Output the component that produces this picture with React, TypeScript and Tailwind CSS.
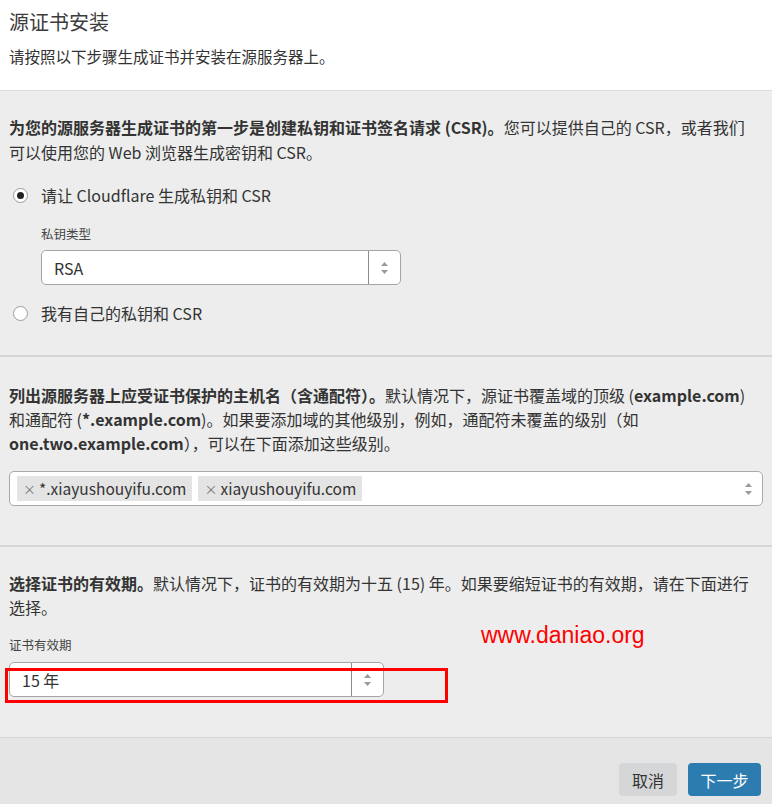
import React from 'react';

const font = { fontFamily: '"Noto Sans CJK SC", "Open Sans", sans-serif' };

function Arrows() {
  return (
    <svg width="9" height="14" viewBox="0 0 9 14" className="text-[#9a9a9a]">
      <path d="M4.5 1 L8 5 L1 5 Z" fill="currentColor" />
      <path d="M4.5 13 L8 9 L1 9 Z" fill="currentColor" />
    </svg>
  );
}

function Radio({ checked, label }: { checked?: boolean; label: string }) {
  return (
    <label className="flex items-center h-5 gap-[13px] pl-[4px]">
      <span className="w-[15px] h-[15px] rounded-full border border-[#9b9b9b] bg-white flex items-center justify-center">
        {checked && <span className="w-[7px] h-[7px] rounded-full bg-[#222]" />}
      </span>
      <span className="text-[16px] text-[#333]">{label}</span>
    </label>
  );
}

function Tag({ text }: { text: string }) {
  return (
    <span className="flex items-center h-[25px] bg-[#e4e4e4] px-[6px] gap-[3px] text-[15.5px] text-[#333]">
      <span className="text-[#777] text-[13px]">×</span>
      {text}
    </span>
  );
}

export default function App() {
  return (
    <div className="w-[772px] h-[804px] bg-[#ecedec] text-[#333] overflow-hidden" style={font}>
      {/* header */}
      <div className="bg-white h-[91px] border-b border-[#dcdcdc] px-[9px] pt-[8px]">
        <h1 className="text-[20px] leading-[28px] text-[#3c3c3c]">源证书安装</h1>
        <p className="mt-[8px] text-[15.5px] leading-[24px] text-[#333]">请按照以下步骤生成证书并安装在源服务器上。</p>
      </div>

      {/* step 1 */}
      <div className="h-[266px] border-b-2 border-[#d6d6d6] px-[9px] pt-[24px]">
        <p className="text-[16px] leading-[25px]">
          <b className="font-bold">为您的源服务器生成证书的第一步是创建私钥和证书签名请求 (CSR)。</b>
          您可以提供自己的 CSR，或者我们
          <br />
          可以使用您的 Web 浏览器生成密钥和 CSR。
        </p>
        <div className="mt-[20px]">
          <Radio checked label="请让 Cloudflare 生成私钥和 CSR" />
        </div>
        <div className="pl-[32px] mt-[20px]">
          <div className="text-[12.5px] leading-[18px] text-[#444]">私钥类型</div>
          <div className="mt-[7px] w-[360px] h-[35px] bg-white border border-[#a5a5a5] rounded-[5px] flex items-stretch">
            <span className="flex-1 flex items-center pl-[12px] text-[16px]">RSA</span>
            <span className="w-[32px] border-l border-[#8c8c8c] flex items-center justify-center">
              <Arrows />
            </span>
          </div>
        </div>
        <div className="mt-[18px]">
          <Radio label="我有自己的私钥和 CSR" />
        </div>
      </div>

      {/* step 2 */}
      <div className="h-[190px] border-b-2 border-[#d6d6d6] px-[9px] pt-[26px]">
        <p className="text-[16px] leading-[24px]">
          <b className="font-bold">列出源服务器上应受证书保护的主机名（含通配符）。</b>
          默认情况下，源证书覆盖域的顶级 (<b className="font-bold">example.com</b>)
          <br />
          和通配符 (<b className="font-bold">*.example.com</b>)。如果要添加域的其他级别，例如，通配符未覆盖的级别（如
          <br />
          <b className="font-bold">one.two.example.com</b>），可以在下面添加这些级别。
        </p>
        <div className="mt-[16px] h-[35px] bg-white border border-[#a9a9a9] rounded-[5px] flex items-center pl-[7px] pr-[9px] gap-[6px]">
          <Tag text="*.xiayushouyifu.com" />
          <Tag text="xiayushouyifu.com" />
          <span className="flex-1" />
          <Arrows />
        </div>
      </div>

      {/* step 3 */}
      <div className="h-[191px] border-b border-[#d5d5d5] px-[9px] pt-[24px]">
        <p className="text-[16px] leading-[24px]">
          <b className="font-bold">选择证书的有效期。</b>
          默认情况下，证书的有效期为十五 (15) 年。如果要缩短证书的有效期，请在下面进行
          <br />
          选择。
        </p>
        <div className="mt-[17px] relative">
          <div className="text-[12.5px] leading-[18px] text-[#444]">证书有效期</div>
          <span
            className="absolute left-[472px] top-[-18px] text-[23px] text-[#ff0000]"
            style={{ fontFamily: '"Liberation Sans", sans-serif' }}
          >
            www.daniao.org
          </span>
          <div className="relative mt-[8px] w-[375px] h-[35px] bg-white border border-[#a5a5a5] rounded-[5px] flex items-stretch">
            <span className="flex-1 flex items-center pl-[12px] text-[16px]">15 年</span>
            <span className="w-[32px] border-l border-[#8c8c8c] flex items-center justify-center">
              <Arrows />
            </span>
            <span className="absolute left-[-5px] top-[5px] w-[443px] h-[35px] border-[3px] border-[#ff0000]" />
          </div>
        </div>
      </div>

      {/* footer */}
      <div className="h-[66px] bg-[#e5e5e5] flex justify-end items-start gap-[11px] pr-[11px] pt-[25px]">
        <button className="h-[33px] w-[58px] rounded-[4px] bg-[#d5d6d7] text-[16px] text-[#333]">取消</button>
        <button className="h-[33px] w-[73px] rounded-[4px] bg-[#2c7cb0] text-[16px] text-white">下一步</button>
      </div>
    </div>
  );
}
